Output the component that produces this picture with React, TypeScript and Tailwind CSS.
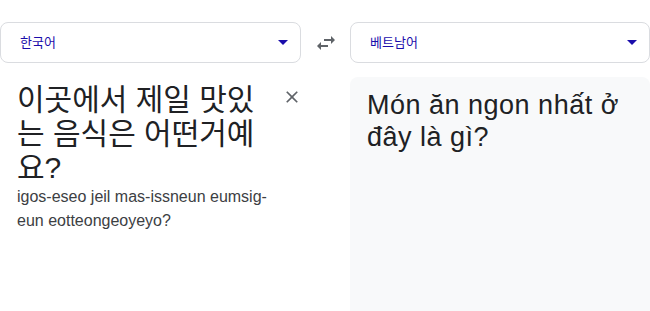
import React from "react";

function Caret() {
  return (
    <svg width="10" height="5" viewBox="0 0 10 5" className="shrink-0">
      <path d="M0 0h10L5 5z" fill="#1a0dab" />
    </svg>
  );
}

function LangSelect({ label }: { label: string }) {
  return (
    <div className="h-[41px] flex items-center justify-between pl-[19px] pr-[12px] border border-[#dadce0] rounded-lg bg-white">
      <span className="text-[13px] text-[#1a0dab]">{label}</span>
      <Caret />
    </div>
  );
}

export default function App() {
  return (
    <div
      className="w-[650px] h-[311px] overflow-hidden bg-white pt-[22px]"
      style={{ fontFamily: '"Liberation Sans", "Noto Sans CJK KR", sans-serif' }}
    >
      {/* language bar */}
      <div className="grid grid-cols-[301px_49px_300px] items-center">
        <LangSelect label="한국어" />
        <div className="flex justify-center">
          <svg width="24" height="24" viewBox="0 0 24 24" fill="#5f6368">
            <path d="M6.99 11L3 15l3.99 4v-3H14v-2H6.99v-3zM21 9l-3.99-4v3H10v2h7.01v3L21 9z" />
          </svg>
        </div>
        <LangSelect label="베트남어" />
      </div>

      {/* source / target */}
      <div className="grid grid-cols-[350px_300px] mt-[14px]">
        <div className="flex items-start pl-[17px] pt-[6px]">
          <div className="w-[258px]">
            <p className="text-[30px] leading-[34px] text-[#202124]">
              이곳에서 제일 맛있는 음식은 어떤거예요?
            </p>
            <p className="text-[16px] leading-[24px] text-[#3c4043]">
              igos-eseo jeil mas-issneun eumsig-eun eotteongeoyeyo?
            </p>
          </div>
          <button className="ml-[7px] mt-[4px] w-[20px] h-[20px]">
            <svg width="20" height="20" viewBox="0 0 24 24" fill="#5f6368">
              <path d="M19 6.41L17.59 5 12 10.59 6.41 5 5 6.41 10.59 12 5 17.59 6.41 19 12 13.41 17.59 19 19 17.59 13.41 12z" />
            </svg>
          </button>
        </div>
        <div className="h-[240px] bg-[#f8f9fa] rounded-t-lg pl-[17px] pt-[12px]">
          <p className="text-[27px] leading-[32px] tracking-[0.5px] text-[#202124]">
            Món ăn ngon nhất ở đây là gì?
          </p>
        </div>
      </div>
    </div>
  );
}
